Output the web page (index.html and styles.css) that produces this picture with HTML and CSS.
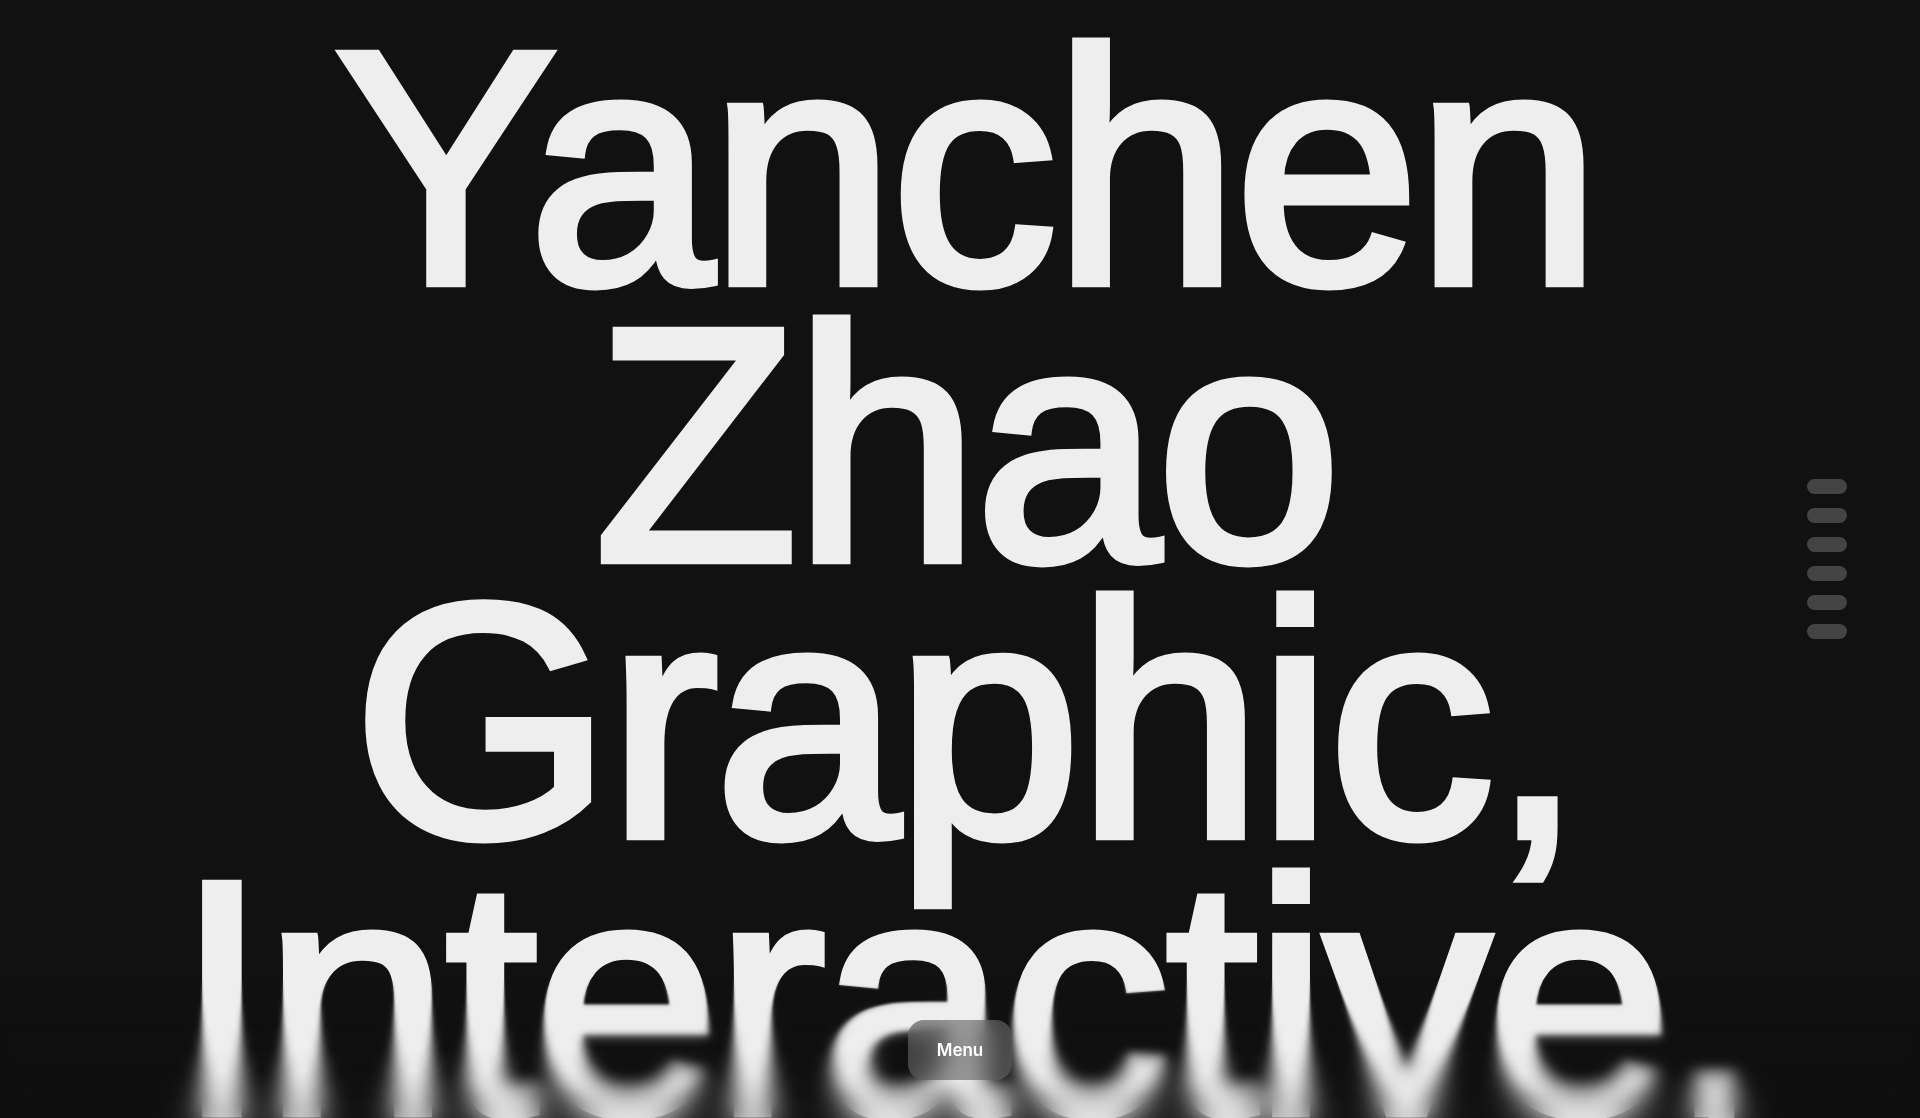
FILE: index.html
```html
<!DOCTYPE html>
<html lang="en">
<head>
<meta charset="utf-8">
<title>Yanchen Zhao</title>
<link rel="stylesheet" href="styles.css">
</head>
<body>
<main class="hero">
  <h1 class="title">
    <span class="line">Yanchen</span>
    <span class="line">Zhao</span>
    <span class="line">Graphic,</span>
    <span class="line">Interactive,</span>
    <span class="line">and Type</span>
    <span class="line">Designer</span>
  </h1>
</main>

<nav class="side-nav" aria-label="Sections">
  <a class="pill" href="#"></a>
  <a class="pill" href="#"></a>
  <a class="pill" href="#"></a>
  <a class="pill" href="#"></a>
  <a class="pill" href="#"></a>
  <a class="pill" href="#"></a>
</nav>

<div class="progressive-blur" aria-hidden="true">
  <div class="pb pb1"></div>
  <div class="pb pb2"></div>
  <div class="pb pb3"></div>
  <div class="pb pb4"></div>
  <div class="pb pb5"></div>
  <div class="pb pb6"></div>
</div>

<button class="menu-btn" type="button">Menu</button>
</body>
</html>
```

FILE: styles.css
```css
html, body {
  margin: 0;
  padding: 0;
  height: 100%;
  overflow: hidden;
  background: #111111;
}

body {
  font-family: "Liberation Sans", Arial, sans-serif;
  color: #eeeeee;
}

.hero {
  padding-top: 30px;
  padding-left: 12px;
  display: flex;
  justify-content: center;
}

.title {
  margin: 0;
  font-family: "Liberation Sans", Arial, sans-serif;
  font-weight: 400;
  font-size: 333px;
  line-height: 276.7px;
  letter-spacing: -4px;
  text-align: center;
  color: #eeeeee;
  -webkit-text-stroke: 8.5px #eeeeee;
  display: flex;
  flex-direction: column;
  align-items: center;
}

.line {
  display: block;
  white-space: nowrap;
}

.side-nav {
  position: fixed;
  right: 73px;
  top: 50%;
  transform: translateY(-50%);
  display: flex;
  flex-direction: column;
  gap: 14px;
}

.pill {
  display: block;
  width: 40px;
  height: 15px;
  border-radius: 8px;
  background: #444444;
}

.progressive-blur {
  position: fixed;
  left: 0;
  right: 0;
  bottom: 0;
  height: 140px;
  pointer-events: none;
}

.pb {
  position: absolute;
  inset: 0;
}

.pb1 {
  backdrop-filter: blur(1px);
  -webkit-mask-image: linear-gradient(to bottom, transparent 0%, #000 16%, #000 33%, transparent 50%);
  mask-image: linear-gradient(to bottom, transparent 0%, #000 16%, #000 33%, transparent 50%);
}
.pb2 {
  backdrop-filter: blur(2.5px);
  -webkit-mask-image: linear-gradient(to bottom, transparent 16%, #000 33%, #000 50%, transparent 66%);
  mask-image: linear-gradient(to bottom, transparent 16%, #000 33%, #000 50%, transparent 66%);
}
.pb3 {
  backdrop-filter: blur(5px);
  -webkit-mask-image: linear-gradient(to bottom, transparent 33%, #000 50%, #000 66%, transparent 83%);
  mask-image: linear-gradient(to bottom, transparent 33%, #000 50%, #000 66%, transparent 83%);
}
.pb4 {
  backdrop-filter: blur(8px);
  -webkit-mask-image: linear-gradient(to bottom, transparent 50%, #000 66%, #000 83%, transparent 100%);
  mask-image: linear-gradient(to bottom, transparent 50%, #000 66%, #000 83%, transparent 100%);
}
.pb5 {
  backdrop-filter: blur(11px);
  -webkit-mask-image: linear-gradient(to bottom, transparent 66%, #000 83%, #000 100%);
  mask-image: linear-gradient(to bottom, transparent 66%, #000 83%, #000 100%);
}
.pb6 {
  backdrop-filter: blur(15px);
  -webkit-mask-image: linear-gradient(to bottom, transparent 83%, #000 100%);
  mask-image: linear-gradient(to bottom, transparent 83%, #000 100%);
}

.menu-btn {
  position: fixed;
  left: 50%;
  bottom: 38px;
  transform: translateX(-50%);
  width: 104px;
  height: 60px;
  border: 0;
  border-radius: 16px;
  background: rgba(100, 100, 100, 0.6);
  backdrop-filter: blur(12px);
  -webkit-backdrop-filter: blur(12px);
  color: #ffffff;
  font-family: Inter, "Liberation Sans", sans-serif;
  font-weight: 600;
  font-size: 17px;
  letter-spacing: 0;
  padding: 0;
  cursor: pointer;
}
```
